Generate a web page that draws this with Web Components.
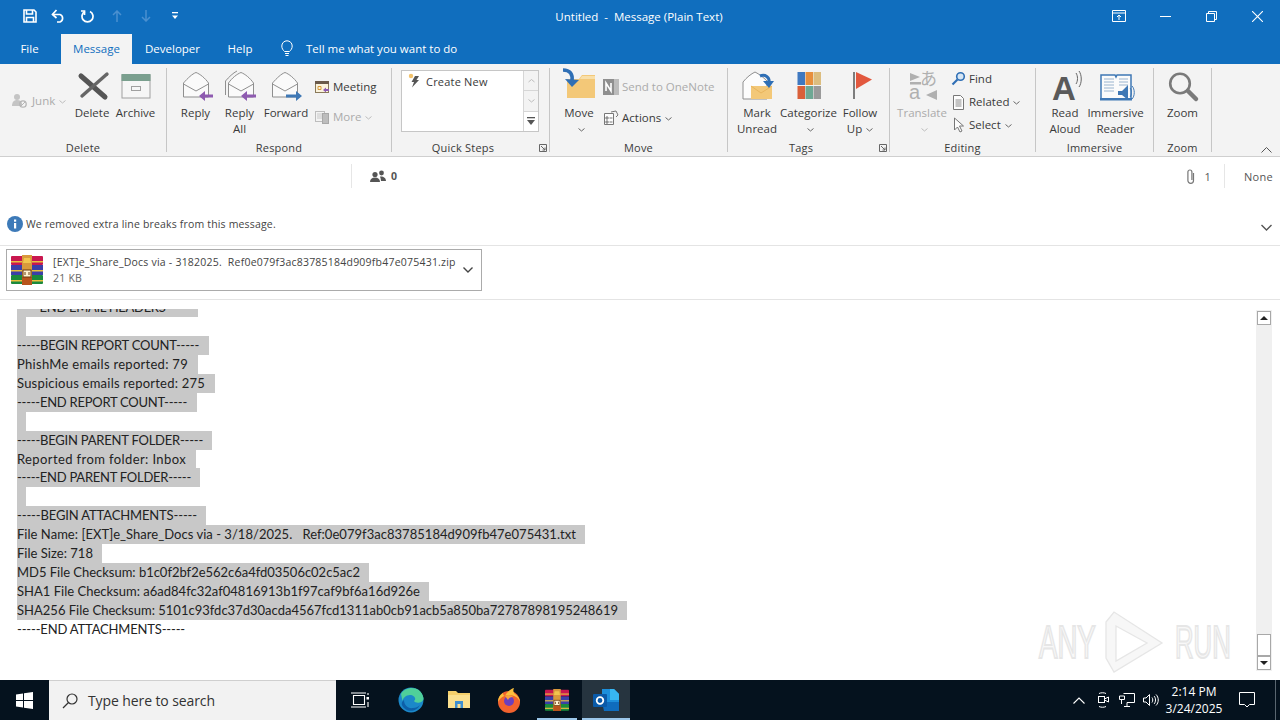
<!DOCTYPE html>
<html>
<head>
<meta charset="utf-8">
<title>Untitled - Message (Plain Text)</title>
<style>
  html, body { margin: 0; height: 100%; overflow: hidden; }
  body {
    width: 1280px; height: 720px; display: flex; flex-direction: column; position: relative;
    background: #fff; color: #333; font: 12px "Open Sans", sans-serif;
  }
  rb-ribbon svg, msg-header svg { display: block; }
</style>
</head>
<body>

<app-titlebar>Untitled  -  Message (Plain Text)</app-titlebar>
<app-tabs></app-tabs>

<rb-ribbon>
  <rb-group label="Delete" w="167" pad="8">
    <rb-small disabled style="width:59px;padding-left:3px;margin-top:25px">
      <svg slot="icon" width="18" height="16" viewBox="0 0 18 16"><circle cx="6" cy="4" r="3" fill="#c4c4c4"/><path d="M1 13c0-4 2-6 5-6s4 1 5 3v3z" fill="#c4c4c4"/><circle cx="12" cy="11" r="3.2" fill="none" stroke="#b5b5b5" stroke-width="1.3"/><path d="M10 13l4-4" stroke="#b5b5b5"/></svg>
      Junk<ui-chev></ui-chev>
    </rb-small>
    <rb-big w="44">
      <svg slot="icon" width="36" height="37" viewBox="0 0 36 37"><path d="M7 8l24 21" stroke="#555" stroke-width="5" stroke-linecap="round"/><path d="M33 6L8 28" stroke="#666" stroke-width="3.4" stroke-linecap="round"/></svg>
      Delete
    </rb-big>
    <rb-big w="43">
      <svg slot="icon" width="32" height="37" viewBox="0 0 32 37"><rect x="2" y="7" width="28" height="23" fill="#f6f6f6" stroke="#a0a0a0"/><rect x="1.500" y="6" width="29" height="7" fill="#7a9f8e"/><rect x="11.500" y="18.500" width="9" height="4" fill="none" stroke="#a0a0a0"/></svg>
      Archive
    </rb-big>
  </rb-group>

  <rb-group label="Respond" w="225" pad="7">
    <rb-big w="43">
      <svg slot="icon" width="34" height="37" viewBox="0 0 34 37"><path d="M4.500 15C9 10 13 6 17 4.500 21 6 26 10 29.500 15V29H4.500z" fill="#fafafa" stroke="#8f8f8f"/><path d="M4.500 16L17 23l12.500-7" fill="none" stroke="#8f8f8f"/><path d="M20 28l6-5v3.500h8v3h-8V33z" fill="#8e5bb0"/></svg>
      Reply
    </rb-big>
    <rb-big w="45">
      <svg slot="icon" width="34" height="37" viewBox="0 0 34 37"><path d="M2.500 27V13C6 9 10 5 14 3" fill="none" stroke="#8f8f8f"/><path d="M5.500 15C9 10 14 6 18 4.500 22 6 27 10 30.500 15V29H5.500z" fill="#fafafa" stroke="#8f8f8f"/><path d="M5.500 16L18 23l12.500-7" fill="none" stroke="#8f8f8f"/><path d="M18 28l6-5v3.500h9v3h-9V33z" fill="#8e5bb0"/></svg>
      Reply<br>All
    </rb-big>
    <rb-big w="48">
      <svg slot="icon" width="36" height="37" viewBox="0 0 36 37"><path d="M4.500 15C9 10 13 6 17 4.500 21 6 26 10 29.500 15V29H4.500z" fill="#fafafa" stroke="#8f8f8f"/><path d="M4.500 16L17 23l12.500-7" fill="none" stroke="#8f8f8f"/><path d="M34 28l-6-5v3.500h-10v3h10V33z" fill="#3f78b5"/></svg>
      Forward
    </rb-big>
    <rb-col style="margin-left:4px;padding-top:11px;gap:14px">
      <rb-small>
        <svg slot="icon" width="16" height="16" viewBox="0 0 16 16"><rect x="1.500" y="2.500" width="13" height="11" fill="#fbf3dd" stroke="#8a7a5a"/><rect x="1" y="2" width="14" height="3" fill="#6b5a4a"/><path d="M4 7.500h3v3H4z" fill="none" stroke="#d79a3a"/><path d="M9 11l3-2.500v1.500h3v2h-3v1.500z" fill="#8e5bb0"/></svg>
        Meeting
      </rb-small>
      <rb-small disabled>
        <svg slot="icon" width="16" height="16" viewBox="0 0 16 16"><rect x="1.500" y="2.500" width="9" height="10" fill="none" stroke="#bdbdbd"/><path d="M3 5h6M3 7h6M3 9h6" stroke="#c8c8c8"/><rect x="8.500" y="4.500" width="6" height="10" fill="#bdbdbd" stroke="#a8a8a8"/></svg>
        More<ui-chev></ui-chev>
      </rb-small>
    </rb-col>
  </rb-group>

  <rb-group label="Quick Steps" w="158" pad="9" launcher>
    <quick-steps></quick-steps>
  </rb-group>

  <rb-group label="Move" w="178" pad="8">
    <rb-big w="42">
      <svg slot="icon" width="36" height="37" viewBox="0 0 36 37"><path d="M6 11h12l3-4h13v23H6z" fill="#f3c878"/><path d="M21 8h13v3H19z" fill="#f8dfa9"/><path d="M2 2c7 0 10 4 9 11" fill="none" stroke="#2f6fb5" stroke-width="3.600"/><path d="M4 11l7 8 7-7z" fill="#2f6fb5"/></svg>
      Move<br><ui-chev></ui-chev>
    </rb-big>
    <rb-col style="margin-left:3px;padding-top:11px;gap:15px">
      <rb-small disabled>
        <svg slot="icon" width="16" height="16" viewBox="0 0 16 16"><rect x="0" y="0" width="16" height="16" fill="#8f8f8f"/><rect x="11" y="0" width="5" height="16" fill="#bcbcbc"/><path d="M3 12V4l5 8V4" fill="none" stroke="#fff" stroke-width="1.600"/></svg>
        Send to OneNote
      </rb-small>
      <rb-small>
        <svg slot="icon" width="16" height="16" viewBox="0 0 16 16"><path d="M1.500 3.500h9v11h-9z" fill="#fdfdfd" stroke="#777"/><path d="M3 7h2v2H3zM3 11h2v2H3z" fill="none" stroke="#555" stroke-width=".8"/><path d="M6.500 8h3M6.500 12h3" stroke="#777"/><path d="M8 2l5-1 2 4-2 2" fill="none" stroke="#777"/></svg>
        Actions<ui-chev></ui-chev>
      </rb-small>
    </rb-col>
  </rb-group>

  <rb-group label="Tags" w="162" pad="3" launcher>
    <rb-big w="52">
      <svg slot="icon" width="44" height="37" viewBox="0 0 44 37"><path d="M8 14C12 9 16 6 20 4c4 2 8 5 12 9v18H8z" fill="#fcfcfc" stroke="#8f8f8f"/><path d="M16 18h21v13H16z" fill="#f3c878"/><path d="M16 18l10 7 11-7" fill="none" stroke="#e8b45c"/><path d="M25 8c5-2 10 1 9 7" fill="none" stroke="#2f6fb5" stroke-width="3"/><path d="M28 13l6 7 5-7z" fill="#2f6fb5"/></svg>
      Mark<br>Unread
    </rb-big>
    <rb-big w="51">
      <svg slot="icon" width="30" height="37" viewBox="0 0 30 37"><rect x="3.500" y="4" width="7.500" height="13" fill="#3f78c0"/><rect x="11.500" y="4" width="7.500" height="13" fill="#e78f3d"/><rect x="19.500" y="4" width="7.500" height="13" fill="#dcbd7f"/><rect x="3.500" y="18" width="7.500" height="13" fill="#d9603a"/><rect x="11.500" y="18" width="7.500" height="13" fill="#6ea894"/><rect x="19.500" y="18" width="7.500" height="13" fill="#9a9a9a"/></svg>
      Categorize<br><ui-chev></ui-chev>
    </rb-big>
    <rb-big w="52">
      <svg slot="icon" width="30" height="37" viewBox="0 0 30 37"><rect x="8" y="4" width="2" height="27" fill="#7d7d7d"/><path d="M11 4l16 7.500L11 21z" fill="#e2583e"/></svg>
      Follow<br>Up<ui-chev></ui-chev>
    </rb-big>
  </rb-group>

  <rb-group label="Editing" w="146" pad="8">
    <rb-big w="48" disabled>
      <svg slot="icon" width="40" height="37" viewBox="0 0 40 37" overflow="visible"><path d="M8 5l10 4-10 4zM8 14h11v2.500H8z" fill="#b0b0b0"/><text x="18" y="17" font-family="Noto Sans CJK JP, sans-serif" font-size="17" fill="#b0b0b0">あ</text><text x="7" y="31" font-family="Liberation Sans, sans-serif" font-size="20" fill="#b0b0b0">a</text><path d="M35 22l-11 5 11 5z" fill="#b0b0b0"/></svg>
      Translate<br><ui-chev></ui-chev>
    </rb-big>
    <rb-col style="margin-left:5px;padding-top:3px;gap:7px">
      <rb-small>
        <svg slot="icon" width="15" height="16" viewBox="0 0 15 16"><circle cx="9.500" cy="5.500" r="3.800" fill="#d6e6f5" stroke="#2f6fb5" stroke-width="1.600"/><path d="M6.500 8.500L1.500 13.500" stroke="#2f6fb5" stroke-width="2.200"/></svg>
        Find
      </rb-small>
      <rb-small>
        <svg slot="icon" width="15" height="16" viewBox="0 0 15 16"><path d="M2.500 1.500h7l3 3v11h-10z" fill="#fdfdfd" stroke="#777"/><path d="M4.500 6h6M4.500 8h6M4.500 10h6M4.500 12h6" stroke="#8a8a8a"/></svg>
        Related<ui-chev></ui-chev>
      </rb-small>
      <rb-small>
        <svg slot="icon" width="15" height="16" viewBox="0 0 15 16"><path d="M3.500 1v12l3-3 2.500 5 2-1-2.500-5h4z" fill="#fdfdfd" stroke="#777"/></svg>
        Select<ui-chev></ui-chev>
      </rb-small>
    </rb-col>
  </rb-group>

  <rb-group label="Immersive" w="118" pad="7">
    <rb-big w="44">
      <svg slot="icon" width="44" height="37" viewBox="0 0 44 37" overflow="visible"><text x="9" y="32" font-family="Liberation Sans, sans-serif" font-weight="700" font-size="33" fill="#5a5a5a">A</text><path d="M33 5c2 3 2 8 0 11M36 3c3 4 3 12 0 16" fill="none" stroke="#666"/></svg>
      Read<br>Aloud
    </rb-big>
    <rb-big w="57">
      <svg slot="icon" width="40" height="37" viewBox="0 0 40 37"><path d="M5 7h14l1 2 1-2h14v24H5z" fill="#fbfbfb" stroke="#3f78b5" stroke-width="1.500"/><path d="M4 30h32v2.500H4z" fill="#3f78b5"/><path d="M8 11h10M8 14h10M8 17h10M8 20h10M8 23h10M23 11h9M23 14h9M23 17h9" stroke="#9ab4cf"/><path d="M22 23h4l6-6v15l-6-5h-4z" fill="#3f78b5"/><path d="M34 20c2 2 2 7 0 9M36 18c3 3 3 10 0 13" fill="none" stroke="#3f78b5"/></svg>
      Immersive<br>Reader
    </rb-big>
  </rb-group>

  <rb-group label="Zoom" w="58" pad="0">
    <rb-big w="57">
      <svg slot="icon" width="36" height="37" viewBox="0 0 36 37"><circle cx="15" cy="15.500" r="9.800" fill="none" stroke="#7a7a7a" stroke-width="2.600"/><path d="M23 23l8 8" stroke="#7a7a7a" stroke-width="4.500" stroke-linecap="round"/></svg>
      Zoom
    </rb-big>
  </rb-group>
</rb-ribbon>

<msg-header></msg-header>
<info-bar>We removed extra line breaks from this message.</info-bar>
<attach-row name="[EXT]e_Share_Docs via - 3182025.  Ref0e079f3ac83785184d909fb47e075431.zip" size="21 KB"></attach-row>

<mail-view>
  <mail-line tw="171" hw="181">-----END EMAIL HEADERS-----</mail-line>
  <mail-line hw="9"></mail-line>
  <mail-line tw="182" hw="192">-----BEGIN REPORT COUNT-----</mail-line>
  <mail-line tw="171" hw="181">PhishMe emails reported: 79</mail-line>
  <mail-line tw="188" hw="198">Suspicious emails reported: 275</mail-line>
  <mail-line tw="170" hw="180">-----END REPORT COUNT-----</mail-line>
  <mail-line hw="9"></mail-line>
  <mail-line tw="186" hw="195">-----BEGIN PARENT FOLDER-----</mail-line>
  <mail-line tw="169" hw="179">Reported from folder: Inbox</mail-line>
  <mail-line tw="174" hw="183">-----END PARENT FOLDER-----</mail-line>
  <mail-line hw="9"></mail-line>
  <mail-line tw="180" hw="189">-----BEGIN ATTACHMENTS-----</mail-line>
  <mail-line tw="559" hw="568">File Name: [EXT]e_Share_Docs via - 3/18/2025.   Ref:0e079f3ac83785184d909fb47e075431.txt</mail-line>
  <mail-line tw="76" hw="85">File Size: 718</mail-line>
  <mail-line tw="343" hw="352">MD5 File Checksum: b1c0f2bf2e562c6a4fd03506c02c5ac2</mail-line>
  <mail-line tw="403" hw="412">SHA1 File Checksum: a6ad84fc32af04816913b1f97caf9bf6a16d926e</mail-line>
  <mail-line tw="601" hw="610">SHA256 File Checksum: 5101c93fdc37d30acda4567fcd1311ab0cb91acb5a850ba72787898195248619</mail-line>
  <mail-line tw="168">-----END ATTACHMENTS-----</mail-line>
</mail-view>

<task-bar></task-bar>
<any-mark></any-mark>

<script>
const CHEV = `<svg width="7" height="4" viewBox="0 0 7 4"><path d="M.5.500l3 2.500 3-2.500" fill="none" stroke="currentColor"/></svg>`;
const UI_FONT = `"Open Sans", sans-serif`;

class UiChev extends HTMLElement {
  constructor() {
    super();
    this.attachShadow({ mode: "open" }).innerHTML = `
      <style>:host{display:inline-block;margin-left:4px;vertical-align:middle;line-height:0;opacity:.75}</style>${CHEV}`;
  }
}
customElements.define("ui-chev", UiChev);

class AppTitlebar extends HTMLElement {
  constructor() {
    super();
    this.attachShadow({ mode: "open" }).innerHTML = `
    <style>
      :host{display:flex;height:32px;background:#106ebe;color:#fff;align-items:center;flex:none;position:relative;font:11.5px ${UI_FONT}}
      .qat{display:flex;align-items:center;padding-left:15px}
      .qat span{width:29px;display:flex;justify-content:center}
      .title{position:absolute;left:0;right:2px;text-align:center;white-space:pre;pointer-events:none}
      .win{margin-left:auto;display:flex;height:100%;padding-right:0}
      .win span{width:46px;display:flex;align-items:center;justify-content:center}
      svg{display:block}
    </style>
    <div class="qat">
      <span><svg width="14" height="14" viewBox="0 0 14 14" fill="none" stroke="#fff" stroke-width="1.600"><path d="M1 1h10l2 2v10H1z"/><path d="M3.500 1v4h6V1M3.500 13V8.500h7V13"/></svg></span>
      <span><svg width="15" height="14" viewBox="0 0 15 14" fill="none" stroke="#fff" stroke-width="1.700"><path d="M1.500 5.500h7.500a4 4 0 0 1 0 7.500H6"/><path d="M5.500 1L1.500 5.500l4 3.500"/></svg></span>
      <span><svg width="14" height="14" viewBox="0 0 14 14" fill="none" stroke="#fff" stroke-width="1.700"><path d="M4 2.500a5.500 5.500 0 1 0 5 0"/><path d="M3.500 6V2H0"/></svg></span>
      <span><svg width="10" height="12" viewBox="0 0 10 12" fill="none" stroke="#4a90d0" stroke-width="1.500"><path d="M5 12V1M1 5l4-4 4 4"/></svg></span>
      <span><svg width="10" height="12" viewBox="0 0 10 12" fill="none" stroke="#4a90d0" stroke-width="1.500"><path d="M5 0v11M1 7l4 4 4-4"/></svg></span>
      <span><svg width="8" height="8" viewBox="0 0 8 8" fill="#fff"><rect x="1" y="0" width="6" height="1.300"/><path d="M1 3.500h6L4 7z"/></svg></span>
    </div>
    <div class="title"><slot></slot></div>
    <div class="win">
      <span><svg width="14" height="12" viewBox="0 0 14 12" fill="none" stroke="#fff"><path d="M.5.500h13v11H.5zM.5 3h13"/><path d="M7 10V5M5 7l2-2 2 2"/></svg></span>
      <span><svg width="11" height="1" viewBox="0 0 11 1"><rect width="11" height="1" fill="#fff"/></svg></span>
      <span><svg width="11" height="11" viewBox="0 0 11 11" fill="none" stroke="#fff"><path d="M.5 2.500h8v8h-8zM2.500 2.500v-2h8v8h-2"/></svg></span>
      <span><svg width="11" height="11" viewBox="0 0 11 11" stroke="#fff" stroke-width="1.100"><path d="M0 0l11 11M11 0L0 11"/></svg></span>
    </div>`;
  }
}
customElements.define("app-titlebar", AppTitlebar);

class AppTabs extends HTMLElement {
  constructor() {
    super();
    this.attachShadow({ mode: "open" }).innerHTML = `
    <style>
      :host{display:flex;height:32px;background:#106ebe;color:#fff;flex:none;font:11.5px ${UI_FONT}}
      div{display:flex;align-items:center;justify-content:center;height:30px;margin-top:2px;box-sizing:border-box;padding-bottom:2px}
      .on{background:#f3f3f3;color:#106ebe}
      .tell{gap:13px}
      svg{display:block}
    </style>
    <div style="width:59px">File</div>
    <div class="on" style="width:71px;margin-left:2px">Message</div>
    <div style="width:81px">Developer</div>
    <div style="width:52px;margin-left:1px">Help</div>
    <div class="tell" style="margin-left:15px">
      <svg width="12" height="17" viewBox="0 0 12 17" fill="none" stroke="#fff"><path d="M3.500 11.500C2 10 .8 8.500.8 6a5.200 5.200 0 0 1 10.400 0c0 2.500-1.200 4-2.700 5.500z"/><path d="M4 13.500h4M4.500 15.500h3"/></svg>
      <span>Tell me what you want to do</span>
    </div>`;
  }
}
customElements.define("app-tabs", AppTabs);

class RbRibbon extends HTMLElement {
  constructor() {
    super();
    this.attachShadow({ mode: "open" }).innerHTML = `
    <style>
      :host{display:flex;height:92px;background:#f3f3f3;border-bottom:1px solid #cfcfcf;flex:none;position:relative;font:11.5px ${UI_FONT};color:#3a3a3a}
      .up{position:absolute;right:8px;bottom:3px;line-height:0}
    </style>
    <slot></slot>
    <span class="up"><svg width="11" height="6" viewBox="0 0 11 6" fill="none" stroke="#555"><path d="M.5 5.500l5-5 5 5"/></svg></span>`;
  }
}
customElements.define("rb-ribbon", RbRibbon);

class RbGroup extends HTMLElement {
  constructor() {
    super();
    this.attachShadow({ mode: "open" });
  }
  connectedCallback() {
    const hasLauncher = this.hasAttribute("launcher");
    const launcher = hasLauncher
      ? `<svg class="launch" width="8" height="8" viewBox="0 0 8 8" fill="none" stroke="#666"><path d="M.5 7.500v-7h7v7zM2 2l4 4M6 3.500V6H3.500"/></svg>` : "";
    this.shadowRoot.innerHTML = `
    <style>
      :host{display:flex;flex-direction:column;flex:none;box-sizing:border-box;width:${this.getAttribute("w")}px;position:relative;padding-top:4px}
      :host::after{content:"";position:absolute;right:0;top:4px;bottom:4px;width:1px;background:#c6c6c6}
      .body{display:flex;height:72px;padding-left:${this.getAttribute("pad")}px;align-items:flex-start}
      .label{text-align:center;line-height:16px;font-size:11px;letter-spacing:.2px;padding-right:${hasLauncher ? 16 : 1}px}
      .launch{position:absolute;right:3px;bottom:4px;display:block}
    </style>
    <div class="body"><slot></slot></div>
    <div class="label">${this.getAttribute("label")}</div>
    ${launcher}`;
  }
}
customElements.define("rb-group", RbGroup);

class RbCol extends HTMLElement {
  constructor() {
    super();
    this.attachShadow({ mode: "open" }).innerHTML = `
      <style>:host{display:flex;flex-direction:column;align-items:flex-start;box-sizing:border-box}</style><slot></slot>`;
  }
}
customElements.define("rb-col", RbCol);

class RbBig extends HTMLElement {
  constructor() {
    super();
    this.attachShadow({ mode: "open" });
  }
  connectedCallback() {
    this.shadowRoot.innerHTML = `
    <style>
      :host{display:flex;flex-direction:column;align-items:center;flex:none;width:${this.getAttribute("w")}px}
      :host([disabled]){color:#ababab}
      .icon{height:37px;display:flex;justify-content:center}
      .text{text-align:center;line-height:16px;white-space:nowrap}
    </style>
    <div class="icon"><slot name="icon"></slot></div>
    <div class="text"><slot></slot></div>`;
  }
}
customElements.define("rb-big", RbBig);

class RbSmall extends HTMLElement {
  constructor() {
    super();
    this.attachShadow({ mode: "open" }).innerHTML = `
    <style>
      :host{display:flex;align-items:center;gap:3px;height:16px;line-height:16px;flex:none}
      :host([disabled]){color:#ababab}
      span{white-space:nowrap}
    </style>
    <slot name="icon"></slot><span><slot></slot></span>`;
  }
}
customElements.define("rb-small", RbSmall);

class QuickSteps extends HTMLElement {
  constructor() {
    super();
    this.attachShadow({ mode: "open" }).innerHTML = `
    <style>
      :host{display:flex;height:62px;width:138px;margin-top:2px;background:#fff;box-sizing:border-box;border:1px solid #c6c6c6}
      .list{flex:1;display:flex;gap:6px;align-items:flex-start;padding:2px 0 0 6px}
      .list span{line-height:16px;margin-top:1px;font-size:11px;letter-spacing:.2px}
      .bar{width:14px;display:flex;flex-direction:column;border-left:1px solid #d6d6d6;background:#f3f3f3}
      .bar i{flex:1;display:flex;align-items:center;justify-content:center;border-bottom:1px solid #d6d6d6;color:#bdbdbd}
      .bar i:last-child{border:0;background:#fff;color:#555}
      svg{display:block}
    </style>
    <div class="list">
      <svg width="12" height="15" viewBox="0 0 12 15"><circle cx="3" cy="3" r="2.200" fill="#f2c26b"/><path d="M7 3h4L8.500 7H11L4 14.500 6 9H3.500z" fill="#555"/></svg>
      <span>Create New</span>
    </div>
    <div class="bar">
      <i>${CHEV.replace('M.5.500l3 2.500 3-2.500','M.5 3l3-2.500 3 2.500')}</i>
      <i>${CHEV}</i>
      <i><svg width="8" height="8" viewBox="0 0 8 8" fill="#555"><rect y="0" width="8" height="1.300"/><path d="M0 3h8L4 8z"/></svg></i>
    </div>`;
  }
}
customElements.define("quick-steps", QuickSteps);

class MsgHeader extends HTMLElement {
  constructor() {
    super();
    this.attachShadow({ mode: "open" }).innerHTML = `
    <style>
      :host{display:flex;height:38px;align-items:center;flex:none;font:11px ${UI_FONT};color:#555;letter-spacing:.3px}
      .sep{width:1px;height:24px;background:#e6e6e6}
      .left{margin-left:351px;margin-right:18px}
      b{margin-left:5px;font-weight:700;font-size:10.500px}
      .right{margin-left:auto;display:flex;align-items:center}
      svg{display:block}
    </style>
    <div class="sep left"></div>
    <svg width="16" height="13" viewBox="0 0 16 13" fill="#555"><circle cx="5" cy="4.500" r="2.600"/><path d="M0 12c0-3 2-4.500 5-4.500s5 1.500 5 4.500z"/><circle cx="11.500" cy="3" r="2.400"/><path d="M10 6.500c3-.5 6 1 6 4.500h-5c0-1.500-.5-3-1-4.500z"/></svg>
    <b>0</b>
    <div class="right">
      <svg width="10" height="15" viewBox="0 0 10 15" fill="none" stroke="#777" stroke-width="1.200"><path d="M7.500 4v7.500a2.800 2.800 0 0 1-5.600 0V3a2 2 0 0 1 4 0v8"/></svg>
      <span style="margin-left:8px">1</span>
      <div class="sep" style="margin:0 19px 0 13px"></div>
      <span style="margin-right:7px">None</span>
    </div>`;
  }
}
customElements.define("msg-header", MsgHeader);

class InfoBar extends HTMLElement {
  constructor() {
    super();
    this.attachShadow({ mode: "open" }).innerHTML = `
    <style>
      :host{display:flex;height:51px;box-sizing:border-box;padding:0 8px 0 7px;align-items:flex-start;flex:none;border-bottom:1px solid #e4e4e4;font:10.5px ${UI_FONT};color:#444;letter-spacing:.17px}
      .i{margin-top:21px;margin-right:3px;display:block}
      span{margin-top:21px;line-height:16px}
      .down{margin:29px 0 0 auto;display:block}
    </style>
    <svg class="i" width="16" height="16" viewBox="0 0 16 16"><circle cx="8" cy="8" r="8" fill="#3d7ab8"/><rect x="7" y="7" width="2.200" height="5.500" fill="#fff"/><rect x="7" y="3.500" width="2.200" height="2.200" fill="#fff"/></svg>
    <span><slot></slot></span>
    <svg class="down" width="11" height="7" viewBox="0 0 11 7" fill="none" stroke="#555" stroke-width="1.400"><path d="M.5 1l5 5 5-5"/></svg>`;
  }
}
customElements.define("info-bar", InfoBar);

class RarIcon extends HTMLElement {
  constructor() {
    super();
    this.attachShadow({ mode: "open" });
  }
  connectedCallback() {
    const w = this.getAttribute("w") || 32;
    this.shadowRoot.innerHTML = `
    <style>:host{display:block;line-height:0;flex:none}</style>
    <svg width="${w}" height="${w * 30 / 32}" viewBox="0 0 32 30">
      <rect y="1" width="32" height="9" rx="1" fill="#c9174f"/>
      <rect y="10" width="32" height="10" fill="#3b3fa8"/>
      <rect y="20" width="32" height="9" rx="1" fill="#1a8a3c"/>
      <rect y="6" width="32" height="1.500" fill="#e8c040"/>
      <rect y="15" width="32" height="1.500" fill="#e8c040"/>
      <rect y="25" width="32" height="1.500" fill="#e8c040"/>
      <rect x="11" y="0" width="10" height="30" fill="#d99a3c"/>
      <rect x="11" y="22" width="10" height="8" fill="#b8541c"/>
      <path d="M13 3h6l1 5h-8z" fill="#f2c54e"/>
      <rect x="12" y="15" width="8" height="7" fill="#fff3d0" stroke="#6b3a10"/>
      <path d="M14 17v3M18 17v3" stroke="#6b3a10"/>
    </svg>`;
  }
}
customElements.define("rar-icon", RarIcon);

class AttachRow extends HTMLElement {
  constructor() {
    super();
    this.attachShadow({ mode: "open" });
  }
  connectedCallback() {
    this.shadowRoot.innerHTML = `
    <style>
      :host{display:block;height:54px;box-sizing:border-box;padding:3px 0 0 6px;flex:none;border-bottom:1px solid #e4e4e4;font:10.5px ${UI_FONT};color:#444}
      .card{width:476px;height:42px;box-sizing:border-box;border:1px solid #ababab;display:flex;align-items:center;padding-left:4px}
      .txt{margin-left:10px;line-height:16px;letter-spacing:.22px}
      .txt div{white-space:pre}
      .size{color:#666}
      svg.down{margin-left:auto;margin-right:8px;display:block}
    </style>
    <div class="card">
      <rar-icon w="32"></rar-icon>
      <div class="txt"><div>${this.getAttribute("name")}</div><div class="size">${this.getAttribute("size")}</div></div>
      <svg class="down" width="10" height="6" viewBox="0 0 10 6" fill="none" stroke="#444" stroke-width="1.400"><path d="M.5.500L5 5 9.500.5"/></svg>
    </div>`;
  }
}
customElements.define("attach-row", AttachRow);

class MailView extends HTMLElement {
  constructor() {
    super();
    this.attachShadow({ mode: "open" }).innerHTML = `
    <style>
      :host{display:flex;height:380px;box-sizing:border-box;padding-top:9px;flex:none}
      .body{flex:1;overflow:hidden;padding-left:17px}
      .inner{margin-top:-11px;font:13px Lato,sans-serif;color:#222}
      .sb{width:16px;margin:0 8px 0 0;background:#f0f0f0;margin-top:1px;height:361px;display:flex;flex-direction:column;align-items:center;position:relative}
      .btn{width:14px;height:14px;box-sizing:border-box;border:1px solid #a8a8a8;background:#fff;display:flex;align-items:center;justify-content:center}
      .thumb{width:14px;height:22px;box-sizing:border-box;border:1px solid #a8a8a8;background:#fff;margin-top:auto}
      svg{display:block}
    </style>
    <div class="body"><div class="inner"><slot></slot></div></div>
    <div class="sb">
      <div class="btn" style="margin-top:1px"><svg width="8" height="4" viewBox="0 0 8 4"><path d="M0 4l4-4 4 4z" fill="#222"/></svg></div>
      <div class="thumb"></div>
      <div class="btn" style="margin-bottom:1px"><svg width="8" height="4" viewBox="0 0 8 4"><path d="M0 0l4 4 4-4z" fill="#222"/></svg></div>
    </div>`;
  }
}
customElements.define("mail-view", MailView);

class MailLine extends HTMLElement {
  constructor() {
    super();
    this.attachShadow({ mode: "open" });
  }
  connectedCallback() {
    const hw = this.getAttribute("hw");
    this.shadowRoot.innerHTML = `
    <style>
      :host{display:block;height:18.95px;line-height:18.95px}
      .hl{height:100%;white-space:pre;width:${hw ? hw + "px" : "auto"};background:${hw ? "#c8c8c8" : "transparent"}}
      span{display:inline-block}
    </style>
    <div class="hl"><span><slot></slot></span></div>`;
    // squeeze the run to the width it has in the shot, Lato is not quite Calibri
    const tw = +this.getAttribute("tw");
    const span = this.shadowRoot.querySelector("span");
    const n = this.textContent.length;
    if (tw && n) span.style.letterSpacing = (tw - span.getBoundingClientRect().width) / n + "px";
  }
}
customElements.define("mail-line", MailLine);

class TaskBar extends HTMLElement {
  constructor() {
    super();
    this.attachShadow({ mode: "open" }).innerHTML = `
    <style>
      :host{display:flex;height:40px;background:#05121e;color:#fff;align-items:stretch;flex:none;font:12px ${UI_FONT}}
      .start{width:49px;display:flex;align-items:center;justify-content:center}
      .search{width:287px;background:#f2f2f2;color:#333;display:flex;align-items:center;gap:10px;padding-left:13px;box-sizing:border-box;font:14px ${UI_FONT};border-top:1px solid #cfcfcf}
      .search span{letter-spacing:-.1px}
      .app{width:48px;display:flex;align-items:center;justify-content:center;box-sizing:border-box;position:relative}
      .run::after{content:"";position:absolute;left:4px;right:4px;bottom:0;height:2px;background:#9cc7ea}
      .act{background:#26343f}
      .act::after{left:0;right:0}
      .tray{margin-left:auto;display:flex;align-items:center}
      .tray > span{width:24px;display:flex;justify-content:center}
      .clock{width:62px;text-align:center;line-height:17px;font-size:12px;white-space:nowrap}
      svg{display:block}
    </style>
    <div class="start"><svg width="17" height="17" viewBox="0 0 17 17" fill="#fff"><path d="M0 2.400l7-1V8H0zM8 1.200L17 0v8H8zM0 9h7v6.600l-7-1zM8 9h9v8l-9-1.200z"/></svg></div>
    <div class="search">
      <svg width="16" height="16" viewBox="0 0 16 16" fill="none" stroke="#333" stroke-width="1.200"><circle cx="10" cy="6" r="5"/><path d="M6.500 9.500L1 15"/></svg>
      <span>Type here to search</span>
    </div>
    <div class="app"><svg width="18" height="16" viewBox="0 0 18 16" fill="none" stroke="#fff" stroke-width="1.100"><path d="M2.500 3.500h11v9h-11zM0 1h15M0 15h15"/><rect x="15.500" y="5" width="2.500" height="2.500" fill="#fff" stroke="none"/><path d="M17 1v2M17 10v5"/></svg></div>
    <div class="app" style="margin-left:3px"><svg width="26" height="26" viewBox="0 0 26 26"><circle cx="13" cy="13" r="12.500" fill="#1b88c9"/><path d="M3 7C7-1 23-2 25.500 11c.5 5-8 6-9.500 3 3-2 0-6-4-6-4 0-7 3-7.500 6z" fill="#4fcf9a"/><path d="M6 13c0 5 4 9 9 8 3 0 5-1 7-3-3 6-11 8-16 3-3-3-3-6 0-8z" fill="#0d5fa8"/></svg></div>
    <div class="app"><svg width="22" height="20" viewBox="0 0 22 20"><path d="M0 1h8l2 2h12v15H0z" fill="#f5cf6b"/><rect y="5" width="22" height="13" fill="#fbe08f"/><rect x="7" y="11" width="8" height="7" fill="#3f8fd0"/><rect x="9.500" y="14" width="3" height="4" fill="#fbe08f"/></svg></div>
    <div class="app" style="margin-left:2px"><svg width="24" height="25" viewBox="0 0 24 25"><circle cx="12" cy="14" r="11" fill="#f2622e"/><path d="M1 14C1 9 4 6 6 5c0 2 1 3 2 3 1-3 5-7 9-8-1 2-1 4 1 6 3 2 5 5 5 8-2-5-6-7-11-7S3 10 1 14z" fill="#fbbf3c"/><circle cx="12" cy="13" r="5" fill="#6a3fbf"/><path d="M8 8c3-2 7-1 8 1-3 0-4 1-5 3z" fill="#f8a13a"/></svg></div>
    <div class="app run"><rar-icon w="24"></rar-icon></div>
    <div class="app run act" style="margin-left:1px"><svg width="26" height="24" viewBox="0 0 26 24"><path d="M9 1h12l5 5v12H9z" fill="#1c8fdb"/><path d="M17 1h4l5 5v6h-9z" fill="#37b6f2"/><path d="M9 14h17v9H11z" fill="#0f6cbd"/><rect x="0" y="6" width="14" height="13" rx="1" fill="#0a5aa8"/><circle cx="7" cy="12.500" r="3.300" fill="none" stroke="#fff" stroke-width="1.800"/></svg></div>
    <div class="tray">
      <span><svg width="12" height="7" viewBox="0 0 12 7" fill="none" stroke="#fff" stroke-width="1.100"><path d="M.5 6.500l5.500-5.500 5.500 5.500"/></svg></span>
      <span><svg width="12" height="16" viewBox="0 0 12 16" fill="none" stroke="#fff"><rect x="1.500" y="4.500" width="6" height="6"/><path d="M7.500 7l4-2v5l-4-2M2 1.500c2-1 5-1 7 0M2 14.500c2 1 5 1 7 0"/></svg></span>
      <span><svg width="16" height="15" viewBox="0 0 16 15" fill="none" stroke="#fff"><path d="M4.500.5h11v9H8M2.500 6.500V11M.5 3h5v3.500h-5zM5 13.500h6M8 9.500v4"/></svg></span>
      <span><svg width="16" height="14" viewBox="0 0 16 14" fill="none" stroke="#fff"><path d="M.5 5v4h2.500l3.500 3.500v-11L3 5z"/><path d="M9 4.500c1 1.500 1 3.500 0 5M11 3c2 2 2 6 0 8M13 1.500c3 3 3 8 0 11"/></svg></span>
      <div class="clock">2:14 PM<br>3/24/2025</div>
      <span style="width:44px"><svg width="16" height="16" viewBox="0 0 16 16" fill="none" stroke="#fff"><path d="M.5.500h15v12h-5L8 15l-2.500-2.500h-5z"/></svg></span>
      <span style="width:5px;margin-left:6px;box-sizing:border-box;border-left:1px solid #5a6670;height:40px"></span>
    </div>`;
  }
}
customElements.define("task-bar", TaskBar);

class AnyMark extends HTMLElement {
  constructor() {
    super();
    this.attachShadow({ mode: "open" }).innerHTML = `
    <style>:host{position:absolute;left:1036px;top:606px;pointer-events:none;line-height:0}</style>
    <svg width="200" height="68" viewBox="0 0 200 68" font-family="Liberation Sans, sans-serif" font-size="46" fill="#f8f8f8" stroke="#e6e6e6" stroke-width="2">
      <text transform="translate(3 52) scale(.6 1)">ANY</text>
      <text transform="translate(139 52) scale(.56 1)">RUN</text>
      <path d="M70 16v36l8 14 48-29-48-31-8 10zM80 20l31 17-31 18z" fill="#f7f7f7" stroke-width="1.300"/>
    </svg>`;
  }
}
customElements.define("any-mark", AnyMark);
</script>
</body>
</html>
